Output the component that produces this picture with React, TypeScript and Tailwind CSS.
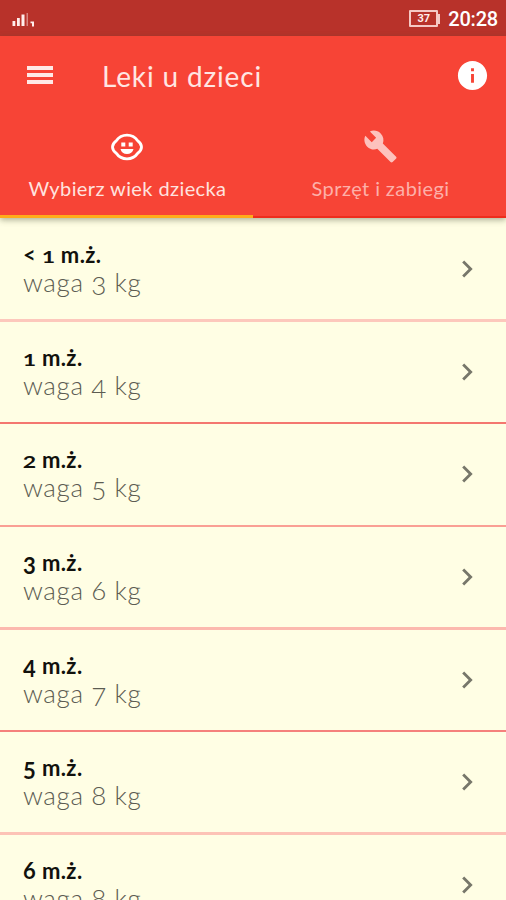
import { MdBuild, MdChevronRight, MdInfo } from "react-icons/md";

const rows = [
  { prefix: "< ", age: "1", weight: "3" },
  { prefix: "", age: "1", weight: "4" },
  { prefix: "", age: "2", weight: "5" },
  { prefix: "", age: "3", weight: "6" },
  { prefix: "", age: "4", weight: "7" },
  { prefix: "", age: "5", weight: "8" },
  { prefix: "", age: "6", weight: "8" },
];

const dividers = [
  "h-[3px] bg-[#fdc8bc]",
  "mt-px h-[2px] bg-[#f4776f]",
  "mt-px h-[2px] bg-[#fa9f94]",
  "h-[3px] bg-[#fcb9ae]",
  "mt-px h-[2px] bg-[#f5817c]",
  "h-[3px] bg-[#fdc3b6]",
];

// Old-style figures: 1 and 2 sit at x-height, 3, 4, 5 and 7 hang below the baseline.
function Digit({ value }: { value: string }) {
  const shape = "12".includes(value)
    ? "origin-[50%_80%] scale-y-[0.8] scale-x-[1.05]"
    : "3457".includes(value)
      ? "translate-y-[3px]"
      : "";
  return <span className={`inline-block leading-[20px] ${shape}`}>{value}</span>;
}

function ChildFace() {
  return (
    <svg className="mr-[2px] h-[28px] w-[34px]" viewBox="0 0 34 28" fill="none">
      <path
        d="M17 2.2c-4.500 0-8.200 1.900-10.600 5.400C4.600 9 2.500 11.600 2.500 14s2.100 5 3.900 6.400C8.800 23.900 12.500 25.800 17 25.800s8.200-1.900 10.600-5.400c1.800-1.400 3.900-4 3.900-6.400s-2.100-5-3.900-6.400C25.200 4.100 21.500 2.200 17 2.200Z"
        stroke="#fff"
        strokeWidth="2.8"
      />
      <path d="M11.300 9.500h4v4h-4zM18.700 9.500h4v4h-4zM10.500 16h13c-.8 3.300-3.200 5-6.500 5s-5.700-1.700-6.500-5Z" fill="#fff" />
    </svg>
  );
}

export default function App() {
  return (
    <main className="flex h-[900px] w-[506px] flex-col overflow-hidden bg-[#fffee4] font-['Lato',sans-serif]">
      <div className="flex h-[36px] shrink-0 items-center justify-between bg-[#b8322a] pr-[8px] pl-[12px] text-[#ffeeec]">
        <svg className="mt-[3px] h-[16px] w-[24px]" viewBox="0 0 24 16" fill="currentColor">
          <path d="M.5 9h2.800v5H.5zM5 6h2.800v8H5zM9.500 2.500h3V14h-3zM18.500 9.500H22v5h-2v-3.300h-1.500z" />
          <path d="M14.500 1H16v13h-1.500z" opacity=".45" />
        </svg>
        <div className="flex items-center gap-[8px] pt-px font-['Roboto',sans-serif]">
          <div className="flex items-center">
            <div className="flex h-[17px] w-[29px] items-center justify-center rounded-[1px] border-2 border-[#f5c9c5] text-[11px] leading-none font-bold">37</div>
            <div className="h-[10px] w-[2px] bg-[#f5c9c5]" />
          </div>
          <span className="text-[20px] leading-none font-medium tracking-[-0.2px] text-white">20:28</span>
        </div>
      </div>
      <header className="relative z-10 h-[182px] shrink-0 bg-[#f74436] text-white shadow-[0_2px_6px_rgba(70,80,50,0.45)]">
        <div className="flex h-[78px] items-center pr-[16px] pl-[27px]">
          <svg className="size-[26px] text-[#ffe9e6]" viewBox="0 0 26 26" fill="currentColor">
            <path d="M0 4h26v4H0zM0 11h26v4H0zM0 18h26v4H0z" />
          </svg>
          <h1 className="ml-[49px] pt-px text-[28px] font-normal tracking-[0.85px] text-[#ffe6e3]">Leki u dzieci</h1>
          <MdInfo className="ml-auto size-[35px]" />
        </div>
        <div className="flex h-[104px]">
          <button className="flex w-[253px] flex-col items-center border-b-[3px] border-[#ffab1a] pt-[19px] pl-[2px]">
            <ChildFace />
            <span className="mt-[15px] text-[20px] leading-[24px] tracking-[0.4px] whitespace-nowrap text-[#ffe2df]">Wybierz wiek dziecka</span>
          </button>
          <button className="flex w-[253px] flex-col items-center border-b-2 border-[#ee2d1d] pt-[15px] pl-[2px]">
            <MdBuild className="mr-px size-[35px] text-[#fdc2bd]" />
            <span className="mt-[12px] text-[20px] leading-[24px] tracking-[0.4px] whitespace-nowrap text-[#fdb0a9]">Sprzęt i zabiegi</span>
          </button>
        </div>
      </header>
      <ul className="-mt-[2px]">
        {rows.map((row, i) => (
          <li key={i} className="flex h-[102.67px] flex-col overflow-hidden">
            {i > 0 && <div className={`w-full shrink-0 ${dividers[i - 1]}`} />}
            <div className={`flex items-start justify-between pr-[22px] pl-[23px] ${i === 0 ? "pt-[25px]" : "pt-[22px]"}`}>
              <div className="whitespace-pre">
                <div className="text-[22px] leading-[28px] font-bold tracking-[0.4px] text-[#11110d]">{row.prefix}<Digit value={row.age} /> m.ż.</div>
                <div className="-mt-[2px] text-[26px] leading-[30px] font-light tracking-[0.6px] text-[#5c5c52]">waga <Digit value={row.weight} /> kg</div>
              </div>
              <MdChevronRight className="mt-[11px] size-[34px] text-[#77776a]" />
            </div>
          </li>
        ))}
      </ul>
    </main>
  );
}
